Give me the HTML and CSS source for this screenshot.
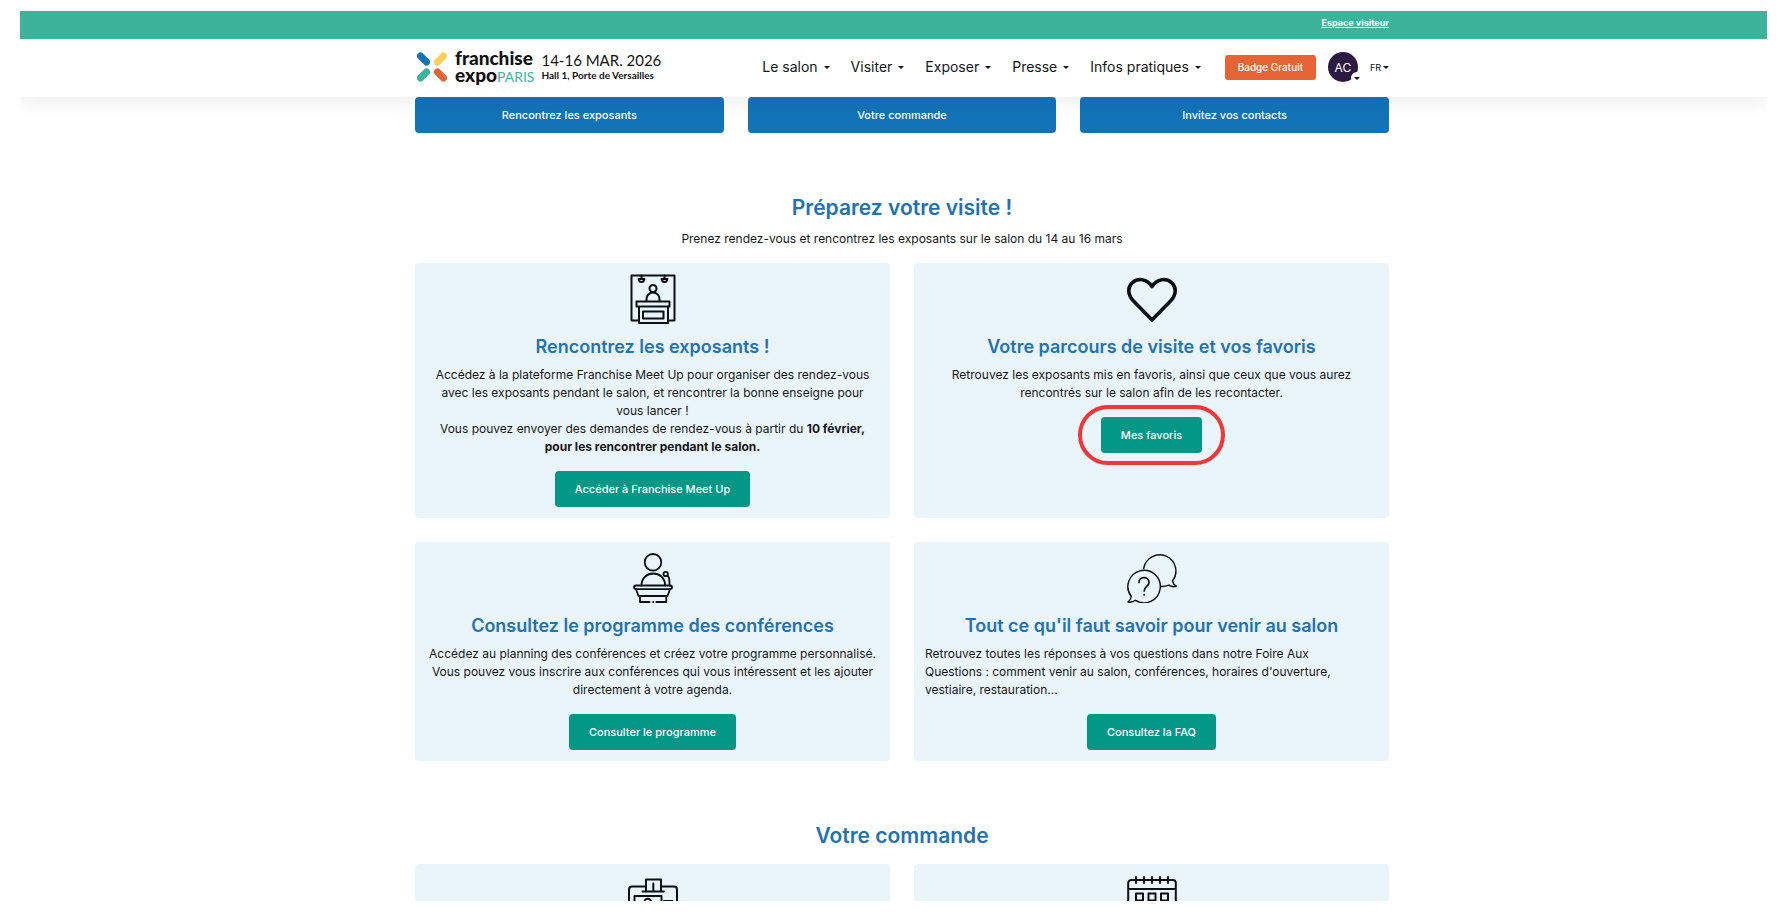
FILE: index.html
```html
<!DOCTYPE html>
<html lang="fr">

<head>
    <meta charset="UTF-8">
    <meta name="viewport" content="width=device-width, initial-scale=1.0">
    <title>Franchise Expo Paris - Espace visiteur</title>
    <link rel="stylesheet" href="styles.css">
</head>

<body>
    <div class="page">
        <div class="topbar">
            <div class="container topbar-inner">
                <a href="#" class="topbar-link">Espace visiteur</a>
            </div>
        </div>

        <header class="header">
            <div class="container header-inner">
                <a href="#" class="logo">
                    <svg class="logo-mark" viewBox="0 0 30 30" fill="none" stroke-width="7" stroke-linecap="round">
                        <path d="M3.500 4l6 6" stroke="#1673b8" />
                        <path d="M26.500 4l-6 6" stroke="#fdd05a" />
                        <path d="M3.500 26l6-6" stroke="#3eb39b" />
                        <path d="M26.500 26l-6-6" stroke="#e66434" />
                    </svg>
                    <span class="logo-name">
                        <span>franchise</span>
                        <span>expo<span class="logo-city">PARIS</span></span>
                    </span>
                    <span class="logo-info">
                        <span class="logo-date">14-16 MAR. 2026</span>
                        <span class="logo-place">Hall 1, Porte de Versailles</span>
                    </span>
                </a>

                <nav class="nav">
                    <a href="#" class="nav-link">Le salon</a>
                    <a href="#" class="nav-link">Visiter</a>
                    <a href="#" class="nav-link">Exposer</a>
                    <a href="#" class="nav-link">Presse</a>
                    <a href="#" class="nav-link">Infos pratiques</a>
                </nav>

                <a href="#" class="badge-btn">Badge Gratuit</a>
                <button type="button" class="avatar">AC<span class="avatar-caret"></span></button>
                <button type="button" class="lang">FR</button>
            </div>
        </header>

        <main class="container">
            <div class="shortcuts">
                <a href="#" class="btn btn-blue">Rencontrez les exposants</a>
                <a href="#" class="btn btn-blue">Votre commande</a>
                <a href="#" class="btn btn-blue">Invitez vos contacts</a>
            </div>

            <section class="section">
                <h2>Préparez votre visite !</h2>
                <p class="intro">Prenez rendez-vous et rencontrez les exposants sur le salon du 14 au 16 mars</p>

                <div class="cards">
                    <div class="card">
                        <svg class="icon" viewBox="0 0 50 50" stroke-width="2">
                            <path d="M11 46.500H3.500V1.500h43v45H40" />
                            <path d="M13.500 1.500v2.500M36.500 1.500v2.500" />
                            <path d="M10.500 5h6M33.500 5h6" />
                            <path d="M11 5.500a2.500 2.500 0 0 0 5 0M34 5.500a2.500 2.500 0 0 0 5 0" />
                            <circle cx="25" cy="14.500" r="3.500" />
                            <path d="M18.500 27v-2a6.500 6.500 0 0 1 13 0v2" />
                            <path d="M8.500 27.500h33v5h-33zM11 32.500h29V49H11zM15 37.500h20.500v7H15z" />
                        </svg>
                        <h3>Rencontrez les exposants !</h3>
                        <p>Accédez à la plateforme Franchise Meet Up pour organiser des rendez-vous<br>
                            avec les exposants pendant le salon, et rencontrer la bonne enseigne pour<br>
                            vous lancer !<br>
                            Vous pouvez envoyer des demandes de rendez-vous à partir du <strong>10 février,<br>
                            pour les rencontrer pendant le salon.</strong></p>
                        <a href="#" class="btn btn-green">Accéder à Franchise Meet Up</a>
                    </div>

                    <div class="card">
                        <svg class="icon" viewBox="0 0 50 50" stroke-width="3.600">
                            <path d="M25 46L6.500 27C.500 21 .500 13.500 5 9C10.500 3.500 20 4.500 25 12.500C30 4.500 39.500 3.500 45 9C49.500 13.500 49.500 21 43.500 27z" />
                        </svg>
                        <h3>Votre parcours de visite et vos favoris</h3>
                        <p>Retrouvez les exposants mis en favoris, ainsi que ceux que vous aurez<br>
                            rencontrés sur le salon afin de les recontacter.</p>
                        <a href="#" class="btn btn-green btn-ring">Mes favoris</a>
                    </div>

                    <div class="card">
                        <svg class="icon" viewBox="0 0 50 50" stroke-width="1.800">
                            <circle cx="25" cy="9.300" r="8.300" />
                            <path d="M13.500 32.500c0-16 23.600-16 23.600 0" />
                            <circle cx="37.700" cy="21" r="2.200" />
                            <path d="M39.200 22.500c2 1.500 2.300 3 2.300 10" />
                            <rect x="6" y="32.500" width="38" height="3.600" rx="1.800" />
                            <path d="M8 36.300l2.500 6.700h29l2.500-6.700" />
                            <path d="M21.500 49h-9.500V43M28.300 49h10V43M25 49h.200" />
                        </svg>
                        <h3>Consultez le programme des conférences</h3>
                        <p>Accédez au planning des conférences et créez votre programme personnalisé.<br>
                            Vous pouvez vous inscrire aux conférences qui vous intéressent et les ajouter<br>
                            directement à votre agenda.</p>
                        <a href="#" class="btn btn-green">Consulter le programme</a>
                    </div>

                    <div class="card">
                        <svg class="icon" viewBox="0 0 50 50" stroke-width="1.400">
                            <path d="M16.700 15.500A16.200 16.200 0 1 1 45.500 28c.5 2.500 1.500 4 3.800 5.200c-2.500.9-5 .6-7.500-1c-2.500 1-5 1.600-8.300 1.300" />
                            <path d="M4.300 43.500a16.200 16.200 0 1 1 4.200 3.800c-2.500 1.800-5 2.300-7.500 1.700c2-1.300 3-3 3.300-5.500z" />
                            <path d="M12 29.500c0-6.500 10-6.500 10 0c0 4-4.800 4-4.800 8.500M17.200 41.500v.5" stroke-width="1.700" />
                        </svg>
                        <h3>Tout ce qu'il faut savoir pour venir au salon</h3>
                        <p class="text-left">Retrouvez toutes les réponses à vos questions dans notre Foire Aux<br>
                            Questions : comment venir au salon, conférences, horaires d'ouverture,<br>
                            vestiaire, restauration...</p>
                        <a href="#" class="btn btn-green">Consultez la FAQ</a>
                    </div>
                </div>
            </section>

            <section class="section">
                <h2>Votre commande</h2>

                <div class="cards">
                    <div class="card">
                        <svg class="icon" viewBox="0 0 50 50" stroke-width="2">
                            <path d="M18 11.500H4a3 3 0 0 0-3 3V49h48V14.500a3 3 0 0 0-3-3H33" />
                            <path d="M14.500 16.500H36M18 16.500v-12h15v12M25.300 8.500v8" />
                            <path d="M6.500 42V21h27v21zM36 26h8.500" />
                            <circle cx="19.700" cy="27" r="3.300" />
                        </svg>
                    </div>
                    <div class="card">
                        <svg class="icon" viewBox="0 0 50 50" stroke-width="2">
                            <path d="M1.200 49V8a3 3 0 0 1 3-3h41.600a3 3 0 0 1 3 3v41zM1.200 14h47.600" />
                            <path d="M9 2v6M17 2v6M25 2v6M33 2v6M41 2v6" />
                            <path d="M9 18.500h7v7H9zM21.500 18.500h7v7h-7zM34 18.500h7v7h-7z" />
                        </svg>
                    </div>
                </div>
            </section>
        </main>
    </div>
</body>

</html>
```
FILE: styles.css
```css
* {
    box-sizing: border-box;
}

body {
    margin: 0;
    padding: 11px 20px;
    background: #fff;
    color: #161616;
    font-family: Inter, "Open Sans", sans-serif;
    font-size: 12px;
    line-height: 18px;
}

a {
    color: inherit;
    text-decoration: none;
}

button {
    border: 0;
    padding: 0;
    font-family: inherit;
    cursor: pointer;
}

h2,
h3,
p {
    margin: 0;
}

.page {
    height: calc(100vh - 22px);
    overflow: hidden;
    padding-left: 17px;
}

.container {
    width: 100%;
    max-width: 974px;
    margin: 0 auto;
}

/* top bar + header */

.topbar,
.header {
    margin-left: -17px;
    padding-left: 17px;
}

.topbar {
    background: #3eb39b;
    color: #fff;
}

.topbar-inner {
    display: flex;
    justify-content: flex-end;
    align-items: center;
    height: 28px;
    padding-bottom: 4px;
}

.topbar-link {
    font-size: 9px;
    font-weight: 700;
    text-decoration: underline;
}

.header {
    position: relative;
    z-index: 1;
    background: #fff;
    box-shadow: 0 8px 20px rgba(0, 0, 0, 0.06);
}

.header-inner {
    display: flex;
    align-items: center;
    height: 58px;
    padding-bottom: 2px;
}

.logo {
    display: flex;
    align-items: center;
    color: #111;
    font-family: Lato, sans-serif;
}

.logo-mark {
    width: 30px;
    height: 30px;
    margin: 0 8px 0 2px;
}

.logo-name,
.logo-info {
    display: flex;
    flex-direction: column;
}

.logo-name {
    font-size: 19px;
    font-weight: 900;
    line-height: 17px;
}

.logo-city {
    color: #3eb39b;
    font-size: 14px;
    font-weight: 400;
}

.logo-info {
    margin-left: 7px;
}

.logo-date {
    font-size: 15px;
    line-height: 16px;
}

.logo-place {
    font-size: 10px;
    font-weight: 700;
    line-height: 14px;
}

.nav {
    display: flex;
    gap: 21px;
    margin-left: auto;
    margin-right: 24px;
    font-size: 14px;
}

.nav-link,
.lang {
    display: flex;
    align-items: center;
}

.nav-link::after,
.lang::after,
.avatar-caret::after {
    content: "";
    border: 3px solid transparent;
    border-top-color: #111;
    border-bottom: 0;
}

.nav-link::after {
    margin-left: 6px;
}

.badge-btn {
    width: 91px;
    border-radius: 3px;
    background: #e66434;
    color: #fff;
    font-size: 10px;
    font-weight: 500;
    line-height: 25px;
    text-align: center;
}

.avatar {
    position: relative;
    width: 30px;
    height: 30px;
    margin: 0 12px;
    border-radius: 50%;
    background: #2c1a45;
    color: #fff;
    font-size: 12px;
}

.avatar-caret {
    position: absolute;
    right: -5px;
    bottom: -2px;
    display: flex;
    align-items: center;
    justify-content: center;
    width: 12px;
    height: 12px;
    border-radius: 50%;
    background: #fff;
}

.lang {
    background: none;
    color: #111;
    font-size: 9px;
}

.lang::after {
    margin-left: 2px;
}

/* buttons */

.btn {
    display: inline-block;
    padding: 0 20px;
    border-radius: 4px;
    color: #fff;
    font-size: 11px;
    font-weight: 500;
    line-height: 36px;
    text-align: center;
}

.btn-blue {
    background: #1273b8;
}

.btn-green {
    background: #039785;
}

.btn-ring {
    position: relative;
}

/* red outline around the button */
.btn-ring::after {
    content: "";
    position: absolute;
    inset: -12px -23px;
    border: 4px solid #f23637;
    border-radius: 30px;
}

.shortcuts {
    display: grid;
    grid-template-columns: repeat(3, 1fr);
    gap: 24px;
}

/* sections */

.section {
    padding-top: 62px;
    text-align: center;
}

h2,
h3 {
    color: #2372b0;
    font-weight: 600;
}

h2 {
    font-size: 21px;
    line-height: 26px;
}

h3 {
    margin: 12px 0 8px;
    font-size: 18px;
    line-height: 22px;
}

.intro {
    margin-top: 9px;
}

.cards {
    display: grid;
    grid-template-columns: repeat(2, 1fr);
    gap: 24px;
    margin-top: 15px;
}

.card {
    display: flex;
    flex-direction: column;
    align-items: center;
    padding: 11px;
    border-radius: 4px;
    background: #eaf5fb;
}

.card p {
    margin-bottom: 15px;
}

.card .text-left {
    align-self: stretch;
    text-align: left;
}

.icon {
    width: 50px;
    height: 50px;
    fill: none;
    stroke: #0c0f14;
    stroke-linecap: round;
    stroke-linejoin: round;
}
```
